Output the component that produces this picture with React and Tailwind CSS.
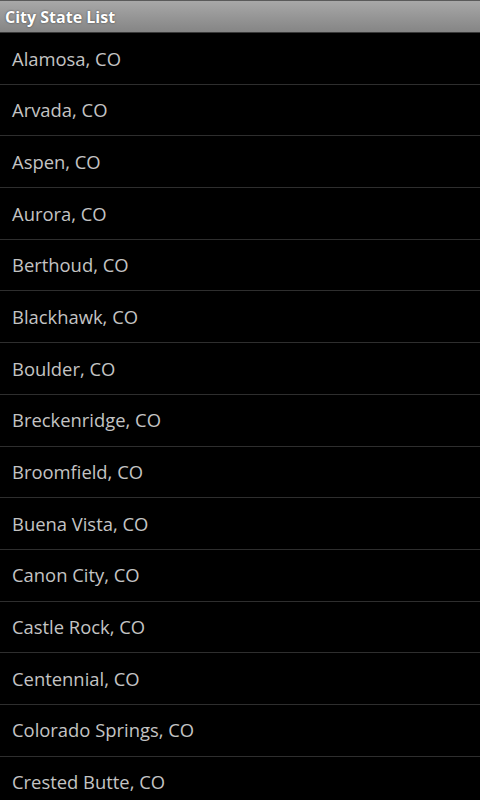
const cities = [
  "Alamosa, CO",
  "Arvada, CO",
  "Aspen, CO",
  "Aurora, CO",
  "Berthoud, CO",
  "Blackhawk, CO",
  "Boulder, CO",
  "Breckenridge, CO",
  "Broomfield, CO",
  "Buena Vista, CO",
  "Canon City, CO",
  "Castle Rock, CO",
  "Centennial, CO",
  "Colorado Springs, CO",
  "Crested Butte, CO",
];

export default function App() {
  return (
    <div className="w-[480px] h-[800px] overflow-hidden bg-black font-['Open_Sans',sans-serif]">
      <div className="h-[33px] flex items-center px-[5px] border-t border-t-[#5a5a5a] border-b border-b-[#3a3a3a] bg-gradient-to-b from-[#a8a8a8] to-[#858585]">
        <span className="text-white font-bold text-[16px] [text-shadow:0_0_2px_rgba(0,0,0,0.6)]">City State List</span>
      </div>
      <ul>
        {cities.map((c) => (
          <li
            key={c}
            className="h-[51.7px] box-border flex items-center pl-[12px] border-b border-[#2e2e2e] text-[#c4c4c4] text-[18.4px]"
          >
            {c}
          </li>
        ))}
      </ul>
    </div>
  );
}
